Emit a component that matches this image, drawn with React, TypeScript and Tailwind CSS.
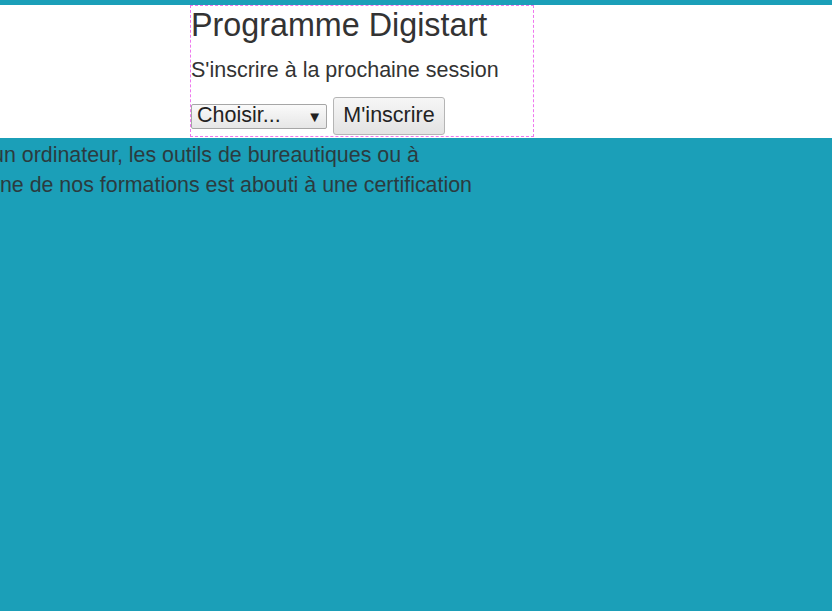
export default function App() {
  return (
    <div
      className="min-h-[611px] w-full overflow-hidden bg-[#1b9fb8] pt-[5px] text-[#333]"
      style={{ fontFamily: '"Liberation Sans", Arial, sans-serif' }}
    >
      <header className="flex h-[133px] w-full bg-white pl-[190px]">
        <div className="flex h-[132px] w-[344px] flex-col border border-dashed border-[#ee77ee]">
          <h1 className="text-[32.3px] leading-[38px] font-normal">Programme Digistart</h1>
          <p className="mt-[14px] text-[21.5px] leading-[25px]">S'inscrire à la prochaine session</p>
          <div className="mt-[14px] flex items-center gap-[6px]">
            <div className="flex h-[25px] w-[136px] items-center justify-between rounded-[2px] border border-[#a6a6a6] bg-gradient-to-b from-[#fafafa] to-[#e6e6e6] pr-[4px] pl-[5px] text-[21.5px] leading-none text-[#222]">
              <span>Choisir...</span>
              <span className="text-[15px]">▼</span>
            </div>
            <button className="flex h-[38px] w-[112px] items-center justify-center rounded-[3px] border border-[#b5b5b5] bg-gradient-to-b from-[#f6f6f6] to-[#e3e3e3] text-[21.5px] leading-none text-[#222]">
              M'inscrire
            </button>
          </div>
        </div>
      </header>
      <div className="pt-[2px] text-[21.4px] leading-[30px] whitespace-nowrap text-[#2b3b3f]">
        <div className="ml-[-8px]">un ordinateur, les outils de bureautiques ou à</div>
        <div className="ml-[-12px]">une de nos formations est abouti à une certification</div>
      </div>
    </div>
  );
}
